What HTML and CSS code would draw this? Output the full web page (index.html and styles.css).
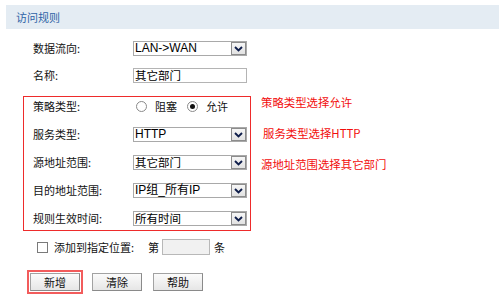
FILE: index.html
```html
<!DOCTYPE html>
<html lang="zh-CN">
<head>
<meta charset="utf-8">
<title>访问规则</title>
<link rel="stylesheet" href="styles.css">
</head>
<body>
<div class="header">访问规则</div>
<div class="form">
  <div class="row top-row">
    <span class="label">数据流向:</span>
    <div class="select"><span class="val">LAN-&gt;WAN</span><span class="arrow"><svg width="9" height="6" viewBox="0 0 9 6"><path d="M1 1 L4.5 4.5 L8 1" fill="none" stroke="#0e1d4a" stroke-width="1.9"/></svg></span></div>
  </div>
  <div class="row top-row second">
    <span class="label">名称:</span>
    <div class="input"><span class="val cjk">其它部门</span></div>
  </div>
  <div class="box-area">
    <div class="box">
      <div class="brow">
        <span class="label">策略类型:</span>
        <div class="radios">
          <span class="radio"></span><span class="rlabel">阻塞</span>
          <span class="radio on"></span><span class="rlabel">允许</span>
        </div>
      </div>
      <div class="brow">
        <span class="label">服务类型:</span>
        <div class="select"><span class="val">HTTP</span><span class="arrow"><svg width="9" height="6" viewBox="0 0 9 6"><path d="M1 1 L4.5 4.5 L8 1" fill="none" stroke="#0e1d4a" stroke-width="1.9"/></svg></span></div>
      </div>
      <div class="brow">
        <span class="label">源地址范围:</span>
        <div class="select"><span class="val cjk">其它部门</span><span class="arrow"><svg width="9" height="6" viewBox="0 0 9 6"><path d="M1 1 L4.5 4.5 L8 1" fill="none" stroke="#0e1d4a" stroke-width="1.9"/></svg></span></div>
      </div>
      <div class="brow">
        <span class="label">目的地址范围:</span>
        <div class="select"><span class="val">IP组_所有IP</span><span class="arrow"><svg width="9" height="6" viewBox="0 0 9 6"><path d="M1 1 L4.5 4.5 L8 1" fill="none" stroke="#0e1d4a" stroke-width="1.9"/></svg></span></div>
      </div>
      <div class="brow">
        <span class="label">规则生效时间:</span>
        <div class="select"><span class="val cjk">所有时间</span><span class="arrow"><svg width="9" height="6" viewBox="0 0 9 6"><path d="M1 1 L4.5 4.5 L8 1" fill="none" stroke="#0e1d4a" stroke-width="1.9"/></svg></span></div>
      </div>
    </div>
    <div class="notes">
      <span class="note">策略类型选择允许</span>
      <span class="note shift">服务类型选择HTTP</span>
      <span class="note">源地址范围选择其它部门</span>
    </div>
  </div>
  <div class="pos-row">
    <span class="checkbox"></span>
    <span class="clabel">添加到指定位置:</span>
    <span class="di">第</span>
    <span class="num-input"></span>
    <span class="tiao">条</span>
  </div>
  <div class="btn-row">
    <span class="btn-focus"><span class="btn">新增</span></span>
    <span class="btn gap1">清除</span>
    <span class="btn gap2">帮助</span>
  </div>
</div>
</body>
</html>
```
FILE: styles.css
```css
html, body {
  margin: 0;
  padding: 0;
  background: #ffffff;
}
body {
  font-family: "Noto Sans CJK SC", "Liberation Sans", sans-serif;
  color: #111;
  width: 500px;
  height: 295px;
  overflow: hidden;
}
.header {
  margin: 5px 1px 0 6px;
  height: 24px;
  line-height: 24px;
  background: #e4ecf3;
  padding-left: 10px;
  font-size: 11px;
  color: #2f63a6;
}
.form {
  padding-top: 12px;
}
.row {
  display: flex;
  align-items: center;
  height: 15px;
  padding-left: 33px;
}
.row.second {
  margin-top: 12px;
}
.label {
  width: 100px;
  flex: none;
  font-size: 11px;
  line-height: 15px;
  color: #111;
}
.select, .input {
  box-sizing: border-box;
  width: 114px;
  height: 15px;
  border: 1px solid #a9a9a9;
  background: #fff;
  display: flex;
  align-items: center;
  position: relative;
}
.input {
  border-color: #b4b4b4;
}
.val {
  font-family: "Liberation Sans", "Noto Sans CJK SC", sans-serif;
  font-size: 12px;
  line-height: 13px;
  color: #000;
  padding-left: 1px;
  flex: 1;
  white-space: nowrap;
}
.val.cjk {
  font-family: "Noto Sans CJK SC", sans-serif;
  font-size: 11.5px;
}
.arrow {
  box-sizing: border-box;
  width: 15px;
  height: 13px;
  border: 1px solid #8c8c8c;
  background: linear-gradient(#f6f6f6, #e2e2e2);
  display: flex;
  align-items: center;
  justify-content: center;
  flex: none;
}
.box-area {
  display: flex;
  align-items: flex-start;
  margin-top: 13px;
  margin-left: 23px;
}
.box {
  box-sizing: border-box;
  width: 228px;
  border: 1px solid #ee2b2b;
  padding: 2px 0 4px 9px;
  display: flex;
  flex-direction: column;
  gap: 13px;
}
.brow {
  display: flex;
  align-items: center;
  height: 15px;
}
.radios {
  display: flex;
  align-items: center;
  padding-left: 3px;
}
.radio {
  box-sizing: border-box;
  width: 11px;
  height: 11px;
  border: 1px solid #8a8a8a;
  border-radius: 50%;
  background: #fff;
  position: relative;
}
.radio.on::after {
  content: "";
  position: absolute;
  left: 2px;
  top: 2px;
  width: 5px;
  height: 5px;
  border-radius: 50%;
  background: #111;
}
.rlabel {
  font-size: 11px;
  margin-left: 8px;
  margin-right: 10px;
  line-height: 15px;
}
.notes {
  margin-left: 10px;
  margin-top: 0;
  display: flex;
  flex-direction: column;
  gap: 19px;
}
.note {
  font-size: 11.4px;
  line-height: 12px;
  color: #f20d0d;
  white-space: nowrap;
}
.note.shift {
  padding-left: 2px;
}
.pos-row {
  display: flex;
  align-items: center;
  height: 16px;
  margin-top: 8px;
  padding-left: 37px;
  font-size: 11px;
}
.checkbox {
  box-sizing: border-box;
  width: 11px;
  height: 11px;
  border: 1px solid #7a7a7a;
  background: #fff;
}
.clabel {
  margin-left: 6px;
}
.di {
  margin-left: 14px;
}
.num-input {
  box-sizing: border-box;
  width: 48px;
  height: 16px;
  margin-left: 3px;
  border: 1px solid #b8b8b8;
  background: #f1f1f1;
}
.tiao {
  margin-left: 4px;
}
.btn-row {
  display: flex;
  align-items: center;
  margin-top: 15px;
  padding-left: 27px;
}
.btn-focus {
  border: 2px solid #f25c5c;
  padding: 1px;
  display: flex;
}
.btn {
  box-sizing: border-box;
  width: 50px;
  height: 18px;
  border: 1px solid #a2a2a2;
  border-right-color: #8a8a8a;
  border-bottom-color: #8a8a8a;
  background: linear-gradient(#fbfbfb, #e6e6e6);
  font-size: 11px;
  line-height: 16px;
  text-align: center;
  color: #111;
  display: block;
}
.gap1 {
  margin-left: 9px;
}
.gap2 {
  margin-left: 11px;
}
```
